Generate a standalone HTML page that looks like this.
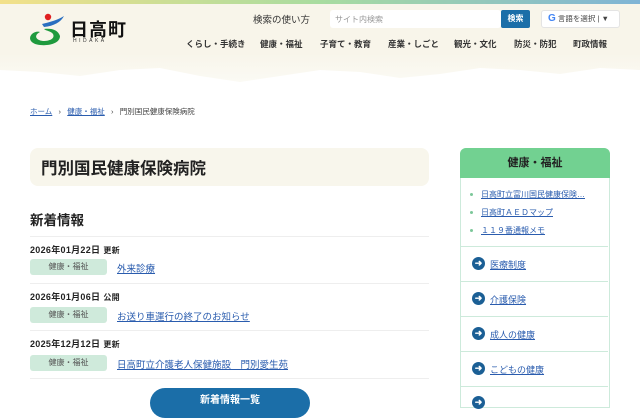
<!DOCTYPE html>
<html><head><meta charset="utf-8"><style>
*{margin:0;padding:0;box-sizing:border-box}
body{width:640px;height:400px;overflow:hidden;background:#fff;font-family:"Liberation Sans","Noto Sans CJK JP",sans-serif;color:#222;position:relative}
.a{position:absolute;white-space:nowrap}
.bar{left:0;top:0;width:640px;height:4px;background:linear-gradient(90deg,#f3e08a,#a8dca0 50%,#7fb4d6)}
.nav{top:38px;font-size:8.5px;font-weight:bold;color:#333}
a,.lk{color:#2a5cae;text-decoration:underline}
.date{font-size:9px;font-weight:bold;letter-spacing:.3px}
.date span{font-size:8px;margin-left:3px}
.tag{left:30px;width:77px;height:16px;background:#cfeadb;border-radius:3px;font-size:8px;color:#555;text-align:center;line-height:16px}
.hl{left:30px;width:399px;height:1px;background:#eee}
.si{left:461px;width:147px;height:1px;background:#cdeadb}
.ci{width:13px;height:13px;border-radius:50%;background:#1b5f95;color:#fff;font-size:9px;text-align:center;line-height:13px;font-weight:bold}
.sl{font-size:9px}
.dot{width:3px;height:3px;background:#7cc79a;border-radius:50%}
</style></head><body>
<svg class="a" style="left:0;top:0" width="640" height="90"><defs><linearGradient id="g" x1="0" y1="0" x2="0" y2="1"><stop offset="0.65" stop-color="#f8f5ea"/><stop offset="1" stop-color="#fbfaf4"/></linearGradient></defs><path d="M0 0H640V70L600 68 560 74 520 70 480 68 440 74 400 78 360 72 320 70 280 76 240 82 200 76 160 68 120 70 80 76 40 72 0 70Z" fill="url(#g)"/></svg>
<div class="a bar"></div>
<svg class="a" style="left:26px;top:12px" width="40" height="36" viewBox="0 0 40 36">
<circle cx="22" cy="5" r="3.2" fill="#e02020"/>
<path d="M16 12C24 10 32 8 38 4 35 10 28 14 18 15Z" fill="#2a6fc0"/>
<path d="M18 17C26 16 32 18 34 24 34 31 24 34 14 33 4 32 2 26 6 22 8 20 12 19 14 20 8 23 9 28 17 29 25 29 29 26 27 22 25 19 20 19 18 17Z" fill="#1f9a3e"/>
</svg>
<div class="a" style="left:70px;top:16px;font-size:18px;font-weight:bold;letter-spacing:1px;color:#111">日高町</div>
<div class="a" style="left:73px;top:38px;font-size:5px;letter-spacing:2.5px;color:#333">HIDAKA</div>
<div class="a" style="left:253px;top:12px;font-size:9.5px;color:#333">検索の使い方</div>
<div class="a" style="left:330px;top:10px;width:171px;height:18px;background:#fff;border-radius:3px;font-size:8px;color:#999;padding:4px 5px">サイト内検索</div>
<div class="a" style="left:501px;top:10px;width:29px;height:18px;background:#1b6ea8;border-radius:2px;color:#fff;font-size:8px;font-weight:bold;text-align:center;line-height:18px">検索</div>
<div class="a" style="left:541px;top:10px;width:79px;height:18px;background:#fff;border:1px solid #e4e4e4;border-radius:3px;font-size:7.5px;color:#444;line-height:16px;padding-left:6px"><b style="color:#4285f4;font-size:10px">G</b> 言語を選択 | ▼</div>
<div class="a nav" style="left:186px">くらし・手続き</div>
<div class="a nav" style="left:260px">健康・福祉</div>
<div class="a nav" style="left:320px">子育て・教育</div>
<div class="a nav" style="left:388px">産業・しごと</div>
<div class="a nav" style="left:454px">観光・文化</div>
<div class="a nav" style="left:514px">防災・防犯</div>
<div class="a nav" style="left:573px">町政情報</div>
<div class="a" style="left:30px;top:106px;font-size:7.5px;color:#444"><span class="lk">ホーム</span>&nbsp;&nbsp; ›&nbsp;&nbsp; <span class="lk">健康・福祉</span>&nbsp;&nbsp; ›&nbsp;&nbsp; 門別国民健康保険病院</div>
<div class="a" style="left:30px;top:148px;width:399px;height:38px;background:#f8f6ec;border-radius:8px"></div>
<div class="a" style="left:41px;top:155px;font-size:16.5px;font-weight:bold">門別国民健康保険病院</div>
<div class="a" style="left:30px;top:209px;font-size:13.5px;font-weight:bold">新着情報</div>
<div class="a hl" style="top:236px"></div>
<div class="a date" style="left:30px;top:243px">2026年01月22日<span>更新</span></div>
<div class="a tag" style="top:259px">健康・福祉</div>
<div class="a lk" style="left:117px;top:261px;font-size:9.5px">外来診療</div>
<div class="a hl" style="top:283px"></div>
<div class="a date" style="left:30px;top:290px">2026年01月06日<span>公開</span></div>
<div class="a tag" style="top:307px">健康・福祉</div>
<div class="a lk" style="left:117px;top:309px;font-size:9.5px">お送り車運行の終了のお知らせ</div>
<div class="a hl" style="top:330px"></div>
<div class="a date" style="left:30px;top:337px">2025年12月12日<span>更新</span></div>
<div class="a tag" style="top:355px">健康・福祉</div>
<div class="a lk" style="left:117px;top:357px;font-size:9.5px">日高町立介護老人保健施設　門別愛生苑</div>
<div class="a hl" style="top:378px"></div>
<div class="a" style="left:150px;top:388px;width:160px;height:30px;background:#1b6ea8;border-radius:15px;color:#fff;font-size:10px;font-weight:bold;text-align:center;line-height:26px">新着情報一覧</div>
<div class="a" style="left:460px;top:148px;width:150px;height:260px;border:1px solid #cdeadb;border-radius:6px 6px 0 0"></div>
<div class="a" style="left:460px;top:148px;width:150px;height:30px;background:#72d191;border-radius:6px 6px 0 0;text-align:center;line-height:30px;font-size:11px;font-weight:bold;color:#222">健康・福祉</div>
<div class="a dot" style="left:470px;top:193px"></div>
<div class="a lk" style="left:481px;top:189px;font-size:8px">日高町立富川国民健康保険…</div>
<div class="a dot" style="left:470px;top:211px"></div>
<div class="a lk" style="left:481px;top:207px;font-size:8px">日高町ＡＥＤマップ</div>
<div class="a dot" style="left:470px;top:229px"></div>
<div class="a lk" style="left:481px;top:225px;font-size:8px">１１９番通報メモ</div>
<div class="a si" style="top:246px"></div>
<div class="a ci" style="left:472px;top:257px">➜</div><div class="a lk sl" style="left:490px;top:258px">医療制度</div>
<div class="a si" style="top:281px"></div>
<div class="a ci" style="left:472px;top:292px">➜</div><div class="a lk sl" style="left:490px;top:293px">介護保険</div>
<div class="a si" style="top:316px"></div>
<div class="a ci" style="left:472px;top:327px">➜</div><div class="a lk sl" style="left:490px;top:328px">成人の健康</div>
<div class="a si" style="top:351px"></div>
<div class="a ci" style="left:472px;top:362px">➜</div><div class="a lk sl" style="left:490px;top:363px">こどもの健康</div>
<div class="a si" style="top:386px"></div>
<div class="a ci" style="left:472px;top:396px">➜</div>
</body></html>
